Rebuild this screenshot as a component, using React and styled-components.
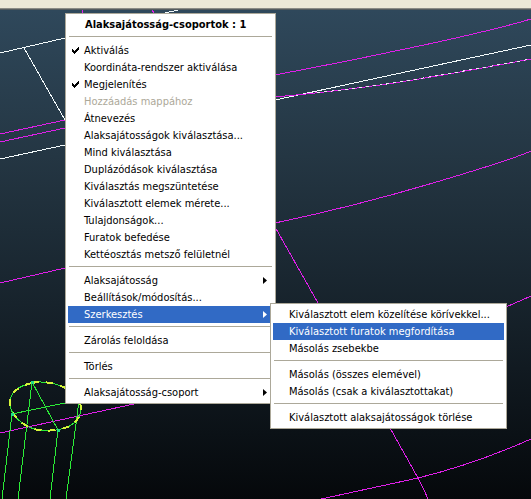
import React from "react";
import styled, { createGlobalStyle } from "styled-components";

const GlobalStyle = createGlobalStyle`
  body {
    margin: 0;
    font-family: "DejaVu Sans Condensed", "DejaVu Sans", sans-serif;
    font-stretch: condensed;
    font-size: 11px;
  }
`;

const Window = styled.div`
  display: flex;
  flex-direction: column;
  min-height: 100vh;
`;

const Toolbar = styled.header`
  height: 8px;
  background: #ece9d8;
  border-bottom: 1px solid #8b8c86;
`;

const Viewport = styled.main`
  position: relative;
  flex: 1;
  overflow: hidden;
  border-top: 1px solid #555d60;
  background: linear-gradient(#2f485b, #243643 30%, #17232c 60%, #05080b);
`;

const Drawing = styled.svg`
  position: absolute;
  inset: 0;
  width: 100%;
  height: 100%;
  fill: none;
  shape-rendering: crispEdges;
`;

const Menu = styled.ul`
  position: absolute;
  z-index: 1;
  box-sizing: border-box;
  margin: 0;
  padding: 2px;
  list-style: none;
  background: #fff;
  border: 1px solid #aca899;
`;

const ContextMenu = styled(Menu)`
  left: 65px;
  top: 3px;
  width: 211px;
`;

const SubMenu = styled(Menu)`
  left: calc(100% - 3px);
  top: -3px;
  width: 237px;
`;

const Row = styled.li`
  position: relative;
`;

const Title = styled.li`
  padding-left: 17px;
  line-height: 17px;
  font-weight: 700;
  white-space: nowrap;
`;

const Separator = styled.li`
  height: 1px;
  margin: 3px 1px 5px;
  background: #aca899;
`;

const Item = styled.button`
  display: grid;
  grid-template-columns: 16px 1fr 12px;
  align-items: center;
  width: 100%;
  height: 17px;
  padding: 0;
  border: none;
  font: inherit;
  line-height: 17px;
  text-align: left;
  white-space: nowrap;
  background: ${props => (props.$active ? "#316ac5" : "transparent")};
  color: ${props => (props.$active ? "#fff" : "#000")};
  &:disabled {
    color: #aca899;
  }
  svg {
    fill: currentColor;
  }
`;

const Mark = styled.svg`
  width: 7px;
  height: 7px;
  margin: 3px 0 0 4px;
`;

const Arrow = styled.svg`
  width: 4px;
  height: 7px;
  margin-left: 2px;
`;

function MenuItem({ label, checked, disabled, active, submenu, children }) {
  return (
    <Row role="none">
      <Item
        type="button"
        role={checked ? "menuitemcheckbox" : "menuitem"}
        aria-checked={checked}
        aria-haspopup={submenu ? "menu" : undefined}
        aria-expanded={submenu ? Boolean(children) : undefined}
        disabled={disabled}
        $active={active}
      >
        <span>
          {checked && (
            <Mark viewBox="0 0 7 7" shapeRendering="crispEdges">
              <path d="M0 2h1v1h1v1h1v-1h1v-1h1v-1h1v-1h1v3h-1v1h-1v1h-1v1h-1v1h-1v-1h-1v-1h-1z" />
            </Mark>
          )}
        </span>
        <span>{label}</span>
        {submenu && (
          <Arrow viewBox="0 0 4 7">
            <path d="M0 0L4 3.5L0 7z" />
          </Arrow>
        )}
      </Item>
      {children}
    </Row>
  );
}

function Wireframe() {
  return (
    <Drawing viewBox="0 10 531 489" preserveAspectRatio="xMinYMin slice" aria-hidden="true">
      <g stroke="#f4fbfc">
        <path d="M0 53L65 38M24 48L65 120M0 159L65 145M165 13L178 10M275 100L531 45" />
      </g>
      <g stroke="#e01fea">
        <path d="M0 134L65 120M0 142L65 128M83 10L82 13M152 10L154 13" />
        <path d="M275 75Q350 61 424 45T531 19" />
        <path d="M275 97Q330 92 380 85T531 59" />
        <path d="M275 223Q352 207 433 183T531 151" />
        <path d="M275 227L318 303M390 428L418 478Q424 489 428 499" />
        <path d="M506 307L531 296M321 499L418 478Q475 464 531 439" />
        <path d="M0 283L65 268M0 433L134 404" />
      </g>
      <path d="M310 93Q346 90 380 85T531 59" stroke="#f4e9f7" strokeDasharray="3 4" />
      <g stroke="#2bec37">
        <path d="M32 382L58 430M12 414L79 400" />
        <path d="M32 382L18 499M12 414L2 499M58 430L50 499M79 401L66 499" />
        <path
          d="M32 383C43 380 63 384 73 393C83 402 83 413 76 421C69 429 54 432 38 430C24 427 10 416 10 403C10 393 18 386 32 383z"
        />
      </g>
      <path
        d="M32 383C43 380 63 384 73 393C83 402 83 413 76 421C69 429 54 432 38 430C24 427 10 416 10 403C10 393 18 386 32 383z"
        stroke="#d4f53a"
        strokeWidth="2"
        strokeDasharray="7 7"
      />
      <path d="M31 382h3M11 414h3M57 430h3" stroke="#1fe08c" strokeWidth="3" />
    </Drawing>
  );
}

export default function App() {
  return (
    <Window>
      <GlobalStyle />
      <Toolbar />
      <Viewport>
        <Wireframe />
        <ContextMenu role="menu">
          <Title role="none">Alaksajátosság-csoportok : 1</Title>
          <Separator role="separator" />
          <MenuItem label="Aktiválás" checked />
          <MenuItem label="Koordináta-rendszer aktiválása" />
          <MenuItem label="Megjelenítés" checked />
          <MenuItem label="Hozzáadás mappához" disabled />
          <MenuItem label="Átnevezés" />
          <MenuItem label="Alaksajátosságok kiválasztása..." />
          <MenuItem label="Mind kiválasztása" />
          <MenuItem label="Duplázódások kiválasztása" />
          <MenuItem label="Kiválasztás megszüntetése" />
          <MenuItem label="Kiválasztott elemek mérete..." />
          <MenuItem label="Tulajdonságok..." />
          <MenuItem label="Furatok befedése" />
          <MenuItem label="Kettéosztás metsző felületnél" />
          <Separator role="separator" />
          <MenuItem label="Alaksajátosság" submenu />
          <MenuItem label="Beállítások/módosítás..." />
          <MenuItem label="Szerkesztés" submenu active>
            <SubMenu role="menu">
              <MenuItem label="Kiválasztott elem közelítése körívekkel..." />
              <MenuItem label="Kiválasztott furatok megfordítása" active />
              <MenuItem label="Másolás zsebekbe" />
              <Separator role="separator" />
              <MenuItem label="Másolás (összes elemével)" />
              <MenuItem label="Másolás (csak a kiválasztottakat)" />
              <Separator role="separator" />
              <MenuItem label="Kiválasztott alaksajátosságok törlése" />
            </SubMenu>
          </MenuItem>
          <Separator role="separator" />
          <MenuItem label="Zárolás feloldása" />
          <Separator role="separator" />
          <MenuItem label="Törlés" />
          <Separator role="separator" />
          <MenuItem label="Alaksajátosság-csoport" submenu />
        </ContextMenu>
      </Viewport>
    </Window>
  );
}
